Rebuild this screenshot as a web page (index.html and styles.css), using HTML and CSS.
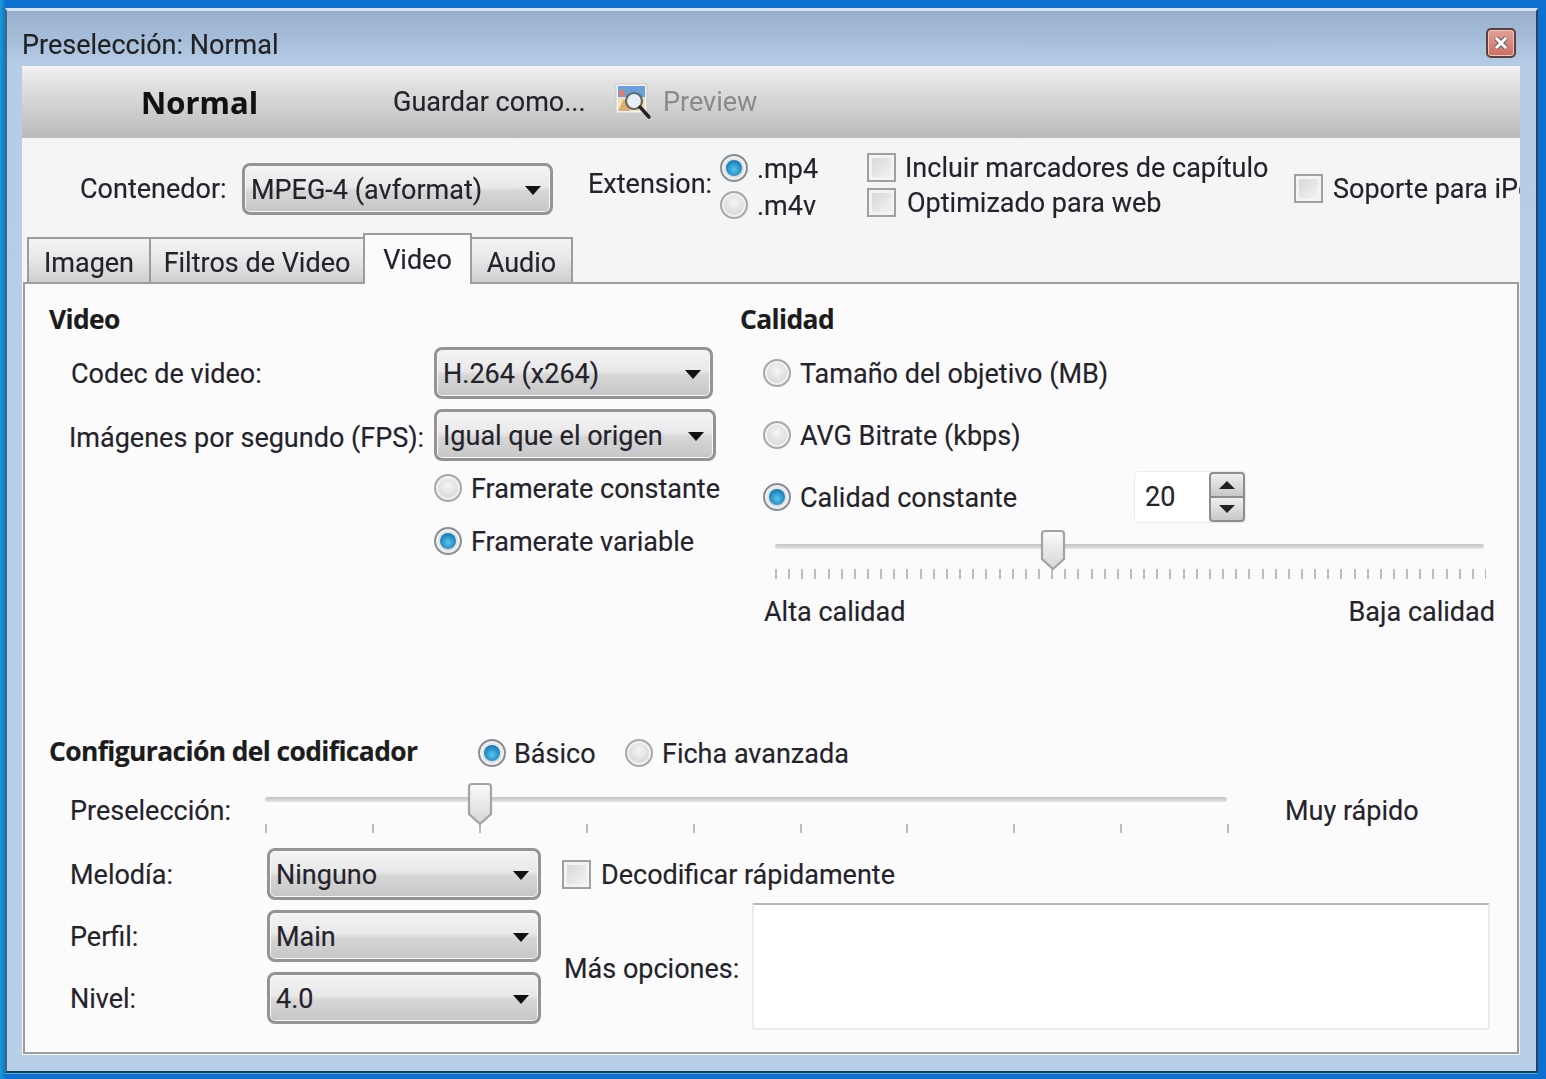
FILE: index.html
```html
<!DOCTYPE html>
<html lang="es">
<head>
<meta charset="utf-8">
<title>Preselección: Normal</title>
<link rel="stylesheet" href="styles.css">
</head>
<body>
<div class="window">
  <header class="titlebar">
    <span class="title">Preselección: Normal</span>
    <span class="close"><svg width="18" height="18" viewBox="0 0 18 18"><path d="M4 4L14 14M14 4L4 14" stroke="#6d5a5a" stroke-width="5" fill="none"/><path d="M4 4L14 14M14 4L4 14" stroke="#fff" stroke-width="3" fill="none"/></svg></span>
  </header>
  <div class="content">
    <div class="toolbar">
      <span class="preset-name">Normal</span>
      <span class="save-as">Guardar como...</span>
      <svg class="preview-icon" width="37" height="38" viewBox="0 0 37 38">
        <rect x="1" y="1" width="31" height="29" fill="#f4f4f4" stroke="#c9c9c9"/>
        <rect x="3" y="3" width="27" height="11" fill="#6aa0dc"/>
        <rect x="3" y="14" width="27" height="14" fill="#f3dfb4"/>
        <path d="M3 28l6-12 6 12z" fill="#dcae72"/>
        <circle cx="7" cy="10" r="3" fill="#e87a64"/>
        <circle cx="19" cy="18" r="8" fill="#e6eff8" stroke="#666" stroke-width="2.2"/>
        <path d="M25 24l9 10" stroke="#222" stroke-width="3.4" stroke-linecap="round"/>
      </svg>
      <span class="preview-label">Preview</span>
    </div>
    <div class="options">
      <span class="opt-label">Contenedor:</span>
      <div class="combo combo-container"><span>MPEG-4 (avformat)</span></div>
      <span class="opt-ext">Extension:</span>
      <div class="ext-list">
        <label class="check-row"><span class="radio on"></span><span>.mp4</span></label>
        <label class="check-row"><span class="radio"></span><span>.m4v</span></label>
      </div>
      <div class="chk-list">
        <label class="check-row"><span class="box"></span><span>Incluir marcadores de capítulo</span></label>
        <label class="check-row"><span class="box"></span><span>Optimizado para web</span></label>
      </div>
      <label class="check-row ipod"><span class="box"></span><span>Soporte para iPod</span></label>
    </div>
    <nav class="tabs">
      <span class="tab tab-imagen">Imagen</span>
      <span class="tab tab-filtros">Filtros de Video</span>
      <span class="tab tab-video">Video</span>
      <span class="tab tab-audio">Audio</span>
    </nav>
    <main class="panel">
      <section class="video-section">
        <div class="col-left">
          <h2 class="heading">Video</h2>
          <div class="field field-codec"><span class="field-label">Codec de video:</span><div class="combo combo-codec"><span>H.264 (x264)</span></div></div>
          <div class="field field-fps"><span class="field-label fps-label">Imágenes por segundo (FPS):</span><div class="combo combo-fps"><span>Igual que el origen</span></div></div>
          <label class="check-row rate rate-first"><span class="radio"></span><span>Framerate constante</span></label>
          <label class="check-row rate rate-second"><span class="radio on"></span><span>Framerate variable</span></label>
        </div>
        <div class="col-right">
          <h2 class="heading">Calidad</h2>
          <label class="check-row q q1"><span class="radio"></span><span>Tamaño del objetivo (MB)</span></label>
          <label class="check-row q q2"><span class="radio"></span><span>AVG Bitrate (kbps)</span></label>
          <div class="q3">
            <label class="check-row q-label"><span class="radio on"></span><span>Calidad constante</span></label>
            <div class="spin"><span class="spin-value">20</span><span class="spin-btns"><span class="spin-btn"><i class="tri-up"></i></span><span class="spin-btn"><i class="tri-down"></i></span></span></div>
          </div>
          <div class="slider slider-quality"><span class="track"></span><svg class="thumb thumb-q" width="26" height="42" viewBox="0 0 26 42"><path d="M2 5a3 3 0 0 1 3-3h16a3 3 0 0 1 3 3v25l-11 10L2 30z" fill="url(#tg)" stroke="#a3a3a3" stroke-width="2.2"/><defs><linearGradient id="tg" x1="0" y1="0" x2="0" y2="1"><stop offset="0" stop-color="#fbfbfb"/><stop offset="1" stop-color="#d6d6d6"/></linearGradient></defs></svg></div>
          <div class="quality-labels"><span>Alta calidad</span><span>Baja calidad</span></div>
        </div>
      </section>
      <section class="encoder">
        <div class="encoder-head">
          <h2 class="heading encoder-title">Configuración del codificador</h2>
          <label class="check-row enc-basic"><span class="radio on"></span><span>Básico</span></label>
          <label class="check-row enc-adv"><span class="radio"></span><span>Ficha avanzada</span></label>
        </div>
        <div class="preset-row">
          <span class="preset-label">Preselección:</span>
          <div class="slider slider-preset"><span class="track"></span><svg class="thumb thumb-p" width="26" height="44" viewBox="0 0 26 44"><path d="M2 5a3 3 0 0 1 3-3h16a3 3 0 0 1 3 3v27l-11 10L2 32z" fill="url(#tg)" stroke="#a3a3a3" stroke-width="2.2"/></svg></div>
          <span class="preset-value">Muy rápido</span>
        </div>
        <div class="lower">
          <div class="lower-left">
            <div class="field"><span class="lower-label">Melodía:</span><div class="combo combo-small"><span>Ninguno</span></div></div>
            <div class="field"><span class="lower-label">Perfil:</span><div class="combo combo-small"><span>Main</span></div></div>
            <div class="field"><span class="lower-label">Nivel:</span><div class="combo combo-small"><span>4.0</span></div></div>
          </div>
          <div class="lower-right">
            <label class="check-row fast"><span class="box"></span><span>Decodificar rápidamente</span></label>
            <div class="more"><span class="more-label">Más opciones:</span><div class="textarea"></div></div>
          </div>
        </div>
      </section>
    </main>
  </div>
</div>
</body>
</html>
```
FILE: styles.css
```css
* { box-sizing: border-box; }
html, body { margin: 0; height: 100%; }
body {
  width: 1546px;
  height: 1079px;
  overflow: hidden;
  padding: 8px 8px 6px 5px;
  background: linear-gradient(90deg, #1f9ad0 0, #0d6fd0 6px, #0d6fd0 100%);
  background-color: #0d6fd0;
  font-family: Roboto, "Open Sans", sans-serif;
  font-size: 27px;
  color: #24222a;
  -webkit-text-stroke: 0.15px #24222a;
}
.window {
  height: 100%;
  border: 2px solid #26465f;
  border-top: 3px solid #d9e2ec;
  border-left-color: #3b6a80;
  border-bottom-color: #173a55;
  box-shadow: 0 1px 0 #45b8e0;
  padding: 0 16px 16px 15px;
  background: linear-gradient(180deg, #98afcd 0, #b6cde7 56px, #b8cfe8 100%);
  display: flex;
  flex-direction: column;
  filter: blur(0.5px);
}
.titlebar {
  height: 55px;
  flex: none;
  display: flex;
  align-items: center;
  justify-content: space-between;
  padding: 12px 4px 0 0;
}
.title { color: #222; white-space: nowrap; font-size: 27px; }
.close {
  width: 30px;
  height: 30px;
  margin-top: -3px;
  border: 2px solid #5b4040;
  border-radius: 5px;
  background: linear-gradient(180deg, #e0a196, #cc6f62);
  box-shadow: inset 0 0 0 1px #eec6be;
  display: flex;
  align-items: center;
  justify-content: center;
}
.content {
  flex: 1;
  background: #f5f5f5;
  display: flex;
  flex-direction: column;
}
.toolbar {
  height: 72px;
  flex: none;
  background: linear-gradient(180deg, #f3f3f3 0, #e4e4e4 20%, #bababa 100%);
  display: flex;
  align-items: center;
  overflow: hidden;
}
.preset-name { margin-left: 119px; width: 252px; font-family: "Open Sans", sans-serif; font-weight: 700; font-size: 31px; color: #111; }
.save-as { width: 222px; white-space: nowrap; }
.preview-icon { flex: none; }
.preview-label { margin-left: 11px; color: #8a8a8a; -webkit-text-stroke: 0; }

.options {
  height: 95px;
  flex: none;
  display: flex;
  overflow: hidden;
  white-space: nowrap;
}
.opt-label { margin: 36px 0 0 58px; width: 162px; line-height: 30px; flex: none; }
.combo {
  height: 52px;
  flex: none;
  display: flex;
  align-items: center;
  position: relative;
  padding: 2px 0 0 6px;
  border: 3px solid #949494;
  border-radius: 8px;
  background: linear-gradient(180deg, #f4f4f4 0, #e9e9e9 45%, #d6d6d6 55%, #c6c6c6 100%);
  box-shadow: inset 0 0 0 1px #f7f7f7;
  white-space: nowrap;
}
.combo::after {
  content: "";
  position: absolute;
  right: 9px;
  top: 20px;
  border-left: 8px solid transparent;
  border-right: 8px solid transparent;
  border-top: 9px solid #111;
}
.combo-container { width: 311px; margin-top: 25px; }
.opt-ext { margin: 31px 0 0 35px; width: 132px; line-height: 30px; flex: none; }
.check-row { display: flex; align-items: center; white-space: nowrap; height: 28px; }
.check-row > span:last-child { padding-top: 2px; }
.radio {
  width: 28px;
  height: 28px;
  flex: none;
  border-radius: 50%;
  border: 2px solid #a9a9a9;
  background: radial-gradient(circle at 50% 40%, #f5f5f5 0, #dedede 55%, #cfcfcf 100%);
  box-shadow: inset 0 0 0 2px #f1f1f1;
  position: relative;
}
.radio.on { border-color: #8a8f95; }
.radio.on::after {
  content: "";
  position: absolute;
  left: 4px;
  top: 4px;
  width: 16px;
  height: 16px;
  border-radius: 50%;
  background: radial-gradient(circle at 50% 60%, #5cc4ec 0, #1f88c0 60%, #10608f 100%);
}
.box {
  width: 29px;
  height: 29px;
  flex: none;
  border: 2px solid #a0a0a0;
  background: linear-gradient(135deg, #d4d4d4, #f6f6f6);
  box-shadow: inset 0 0 0 3px #f3f3f3;
}
.ext-list { margin: 16px 0 0 0; flex: none; width: 147px; display: flex; flex-direction: column; gap: 9px; }
.ext-list .check-row span:last-child { margin-left: 9px; }
.chk-list { margin: 15px 0 0 0; flex: none; width: 427px; display: flex; flex-direction: column; gap: 7px; }
.chk-list .check-row span:last-child { margin-left: 9px; }
.chk-list .check-row:last-child span:last-child { margin-left: 11px; }
.ipod { margin-top: 36px; flex: none; }
.ipod span:last-child { margin-left: 10px; }

.tabs {
  height: 49px;
  flex: none;
  display: flex;
  align-items: flex-end;
  padding-left: 5px;
  position: relative;
  z-index: 1;
}
.tab {
  height: 45px;
  margin-right: -2px;
  border: 2px solid #9c9c9c;
  border-bottom: 0;
  background: linear-gradient(180deg, #f3f3f3, #e8e8e8 45%, #cfcfcf 100%);
  display: flex;
  align-items: center;
  justify-content: center;
  padding-top: 4px;
  white-space: nowrap;
}
.tab-imagen { width: 124px; }
.tab-filtros { width: 216px; }
.tab-video {
  width: 109px;
  height: 51px;
  margin-bottom: -2px;
  background: #fbfbfb;
  padding-top: 0;
  position: relative;
  z-index: 2;
}
.tab-audio { width: 103px; }

.panel {
  flex: none;
  height: 772px;
  margin: 0 1px;
  border: 2px solid #9d9d9d;
  background: #fbfbfb;
  padding-left: 24px;
}
.video-section { display: flex; height: 341px; }
.col-left { width: 691px; flex: none; }
.col-right { flex: 1; min-width: 0; }
.heading { margin: 0; font-size: 26.4px; font-weight: 700; line-height: 28px; letter-spacing: -0.6px; font-family: "Open Sans", sans-serif; white-space: nowrap; color: #1c1c1c; }
.col-left > .heading, .col-right > .heading { margin-top: 21px; }
.field { display: flex; align-items: center; white-space: nowrap; }
.field-codec { margin-top: 14px; }
.field-fps { margin-top: 10px; }
.field-label { width: 385px; padding: 2px 0 0 22px; flex: none; }
.field-label.fps-label { padding: 5px 0 0 20px; }
.combo-codec { width: 279px; }
.combo-fps { width: 282px; }
.rate { margin-left: 385px; }
.rate span:last-child { margin-left: 9px; }
.rate-first { margin-top: 13px; }
.rate-second { margin-top: 25px; }
.q { margin-left: 23px; }
.q span:last-child { margin-left: 9px; }
.q1 { margin-top: 26px; }
.q2 { margin-top: 34px; }
.q3 { margin: 22px 0 0 23px; height: 52px; display: flex; align-items: center; }
.q-label { width: 371px; flex: none; }
.q-label span:last-child { margin-left: 9px; }
.spin {
  width: 112px;
  height: 52px;
  display: flex;
  border: 1px solid #ececec;
  border-radius: 4px;
  background: #fff;
}
.spin-value { flex: 1; padding-left: 10px; line-height: 50px; }
.spin-btns { width: 36px; display: flex; flex-direction: column; }
.spin-btn {
  flex: 1;
  border: 2px solid #8d8d8d;
  background: linear-gradient(180deg, #f0f0f0, #c8c8c8);
  display: flex;
  align-items: center;
  justify-content: center;
}
.spin-btn:first-child { border-bottom-width: 1px; border-radius: 4px 4px 0 0; }
.spin-btn:last-child { border-top-width: 1px; border-radius: 0 0 4px 4px; }
.tri-up { border-left: 8px solid transparent; border-right: 8px solid transparent; border-bottom: 8px solid #222; }
.tri-down { border-left: 8px solid transparent; border-right: 8px solid transparent; border-top: 8px solid #222; }

.slider { position: relative; }
.slider-quality {
  margin: 7px 0 0 35px;
  width: 711px;
  height: 49px;
  background: repeating-linear-gradient(90deg, #bcbcbc 0 2px, transparent 2px 13.15px) 0 100% / 100% 10px no-repeat;
}
.track {
  position: absolute;
  left: 0;
  right: 2px;
  height: 5px;
  border-radius: 3px;
  background: linear-gradient(180deg, #c2c2c2, #e6e6e6);
}
.slider-quality .track { top: 14px; }
.thumb { position: absolute; }
.thumb-q { left: 265px; top: -1px; }
.quality-labels { margin: 19px 0 0 24px; width: 731px; display: flex; justify-content: space-between; line-height: 28px; white-space: nowrap; }

.encoder-head { display: flex; height: 46px; padding-top: 112px; box-sizing: content-box; }
.encoder-title { width: 429px; flex: none; margin: 0; }
.enc-basic { margin-top: 2px; width: 147px; flex: none; }
.enc-basic span:last-child { margin-left: 8px; }
.enc-adv { margin-top: 2px; }
.enc-adv span:last-child { margin-left: 9px; }
.preset-row { display: flex; height: 52px; white-space: nowrap; }
.preset-label { width: 216px; padding: 13px 0 0 21px; line-height: 30px; flex: none; }
.slider-preset {
  width: 964px;
  flex: none;
  height: 50px;
  background: repeating-linear-gradient(90deg, #bcbcbc 0 2px, transparent 2px 106.9px) 0 100% / 100% 9px no-repeat;
}
.slider-preset .track { top: 14px; }
.thumb-p { left: 202px; top: -1px; }
.preset-value { margin-left: 56px; padding-top: 13px; line-height: 30px; }
.lower { display: flex; margin-top: 13px; }
.lower-left { width: 492px; flex: none; display: flex; flex-direction: column; gap: 10px; }
.lower-label { width: 218px; padding: 2px 0 0 21px; flex: none; }
.combo-small { width: 274px; }
.lower-right { margin-left: 21px; }
.fast { margin-top: 12px; }
.fast span:last-child { margin-left: 10px; }
.more { display: flex; align-items: center; margin-top: 15px; white-space: nowrap; }
.more-label { width: 188px; flex: none; margin-left: 2px; padding-top: 4px; }
.textarea {
  width: 738px;
  height: 127px;
  background: #fff;
  border: 2px solid #ececec;
  border-top-color: #b5b5b5;
  border-radius: 2px;
}
```
